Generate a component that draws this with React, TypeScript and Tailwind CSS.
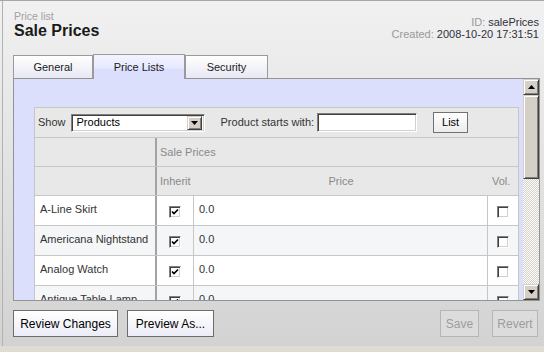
import React from 'react';

const products = ['A-Line Skirt', 'Americana Nightstand', 'Analog Watch', 'Antique Table Lamp'];

const raised =
  'border border-t-[#d4d0c8] border-l-[#d4d0c8] border-r-[#404040] border-b-[#404040] shadow-[inset_1px_1px_0_#ffffff,inset_-1px_-1px_0_#808080] bg-[#d4d0c8]';
const sunken =
  'border border-t-[#808080] border-l-[#808080] border-r-[#ffffff] border-b-[#ffffff] shadow-[inset_1px_1px_0_#404040,inset_-1px_-1px_0_#d4d0c8] bg-white';

function Arrow({ up }: { up?: boolean }) {
  return (
    <svg width="7" height="4" viewBox="0 0 7 4">
      <path d={up ? 'M0 4L3.5 0L7 4Z' : 'M0 0L3.5 4L7 0Z'} fill="#000" />
    </svg>
  );
}

function Check({ checked }: { checked?: boolean }) {
  return (
    <span className={`flex h-[12px] w-[12px] items-center justify-center ${sunken}`}>
      {checked && (
        <svg width="8" height="8" viewBox="0 0 8 8">
          <path d="M1 3.5L3 5.6L7 1.5" stroke="#000" strokeWidth="1.7" fill="none" />
        </svg>
      )}
    </span>
  );
}

function Tab({ label, width, active }: { label: string; width: string; active?: boolean }) {
  if (active) {
    return (
      <div
        className={`${width} -mb-px flex h-[25px] items-center justify-center border border-b-0 border-[#9a9a9a] bg-[linear-gradient(#f3f4ff,#e6e8fe_55%,#dcdffc_60%)] text-[11px] text-[#1a1a1a]`}
      >
        {label}
      </div>
    );
  }
  return (
    <div
      className={`${width} flex h-[23px] items-center justify-center border border-b-0 border-[#9a9a9a] bg-[linear-gradient(#ffffff,#e8e8f4)] text-[11px] text-[#1a1a1a]`}
    >
      {label}
    </div>
  );
}

function Button({ label, width, disabled }: { label: string; width: string; disabled?: boolean }) {
  return (
    <button
      className={`${width} flex h-[27px] items-center justify-center whitespace-nowrap border text-[12px] leading-[14px] ${
        disabled
          ? 'border-[#b6b6b6] bg-[#dcdcdc] text-[#9c9c9c]'
          : 'border-[#6c6c6c] bg-[linear-gradient(#ffffff,#ececf8)] text-[#000]'
      }`}
    >
      {label}
    </button>
  );
}

function Scrollbar() {
  return (
    <div className="flex w-[16px] flex-col">
      <div className={`flex h-[16px] items-center justify-center ${raised}`}>
        <Arrow up />
      </div>
      <div className={`h-[84px] ${raised}`} />
      <div className="flex-1 bg-[repeating-conic-gradient(#d4d0c8_0_25%,#ffffff_0_50%)] bg-[length:2px_2px]" />
      <div className={`flex h-[16px] items-center justify-center ${raised}`}>
        <Arrow />
      </div>
    </div>
  );
}

function PriceTable() {
  return (
    <div className="ml-[20px] mt-[28px] w-[485px] border border-[#c6c6c6] bg-[#e8e8e8] text-[11px] text-[#333]">
      {/* toolbar */}
      <div className="flex h-[30px] items-center border-b border-[#c6c6c6] pl-[3px]">
        <span>Show</span>
        <div className={`ml-[5px] flex h-[18px] w-[134px] items-center justify-between pr-[2px] ${sunken}`}>
          <span className="pl-[5px] text-[#000]">Products</span>
          <span className={`flex h-[14px] w-[15px] items-center justify-center ${raised}`}>
            <Arrow />
          </span>
        </div>
        <span className="ml-[16px]">Product starts with:</span>
        <div className={`ml-[3px] h-[19px] w-[100px] ${sunken}`} />
        <button className="ml-[16px] flex h-[21px] w-[35px] items-center justify-center border border-[#707070] bg-[linear-gradient(#ffffff,#ececec)] text-[11px] text-[#000]">
          List
        </button>
      </div>

      {/* header rows */}
      <div className="flex h-[29px] border-b border-[#c6c6c6]">
        <div className="w-[122px] border-r-2 border-[#a3a3a3]" />
        <div className="flex flex-1 items-center pl-[3px] text-[#888]">Sale Prices</div>
      </div>
      <div className="flex h-[29px] border-b border-[#c6c6c6] text-[#888]">
        <div className="w-[122px] border-r-2 border-[#a3a3a3]" />
        <div className="flex w-[37px] items-center pl-[3px]">Inherit</div>
        <div className="flex w-[294px] items-center justify-center">Price</div>
        <div className="flex flex-1 items-center pl-[4px]">Vol.</div>
      </div>

      {/* data rows */}
      {products.map((name, i) => (
        <div
          key={name}
          className={`flex h-[30px] border-b border-[#c6c6c6] ${i % 2 === 0 ? 'bg-white' : 'bg-[#f5f6f8]'}`}
        >
          <div className="flex w-[122px] items-center whitespace-nowrap border-r-2 border-[#a3a3a3] pb-[2px] pl-[5px]">
            {name}
          </div>
          <div className="flex w-[37px] items-center justify-center border-r border-[#c6c6c6] pt-[3px]">
            <Check checked />
          </div>
          <div className="flex w-[294px] items-center border-r border-[#c6c6c6] pb-[2px] pl-[5px]">0.0</div>
          <div className="flex flex-1 items-center justify-center pt-[2px]">
            <Check />
          </div>
        </div>
      ))}
    </div>
  );
}

export default function App() {
  return (
    <div className="flex h-[352px] w-[544px] flex-col overflow-hidden border-t border-[#a6a6a6] bg-[linear-gradient(#f1f1f1,#d2d2d2)] font-['Liberation_Sans',Arial,sans-serif] text-[#222]">
      <div className="ml-[2px] h-[345px] shrink-0 border-l border-[#b2b2b2]">
        {/* header */}
        <div className="flex h-[53px] justify-between pl-[11px] pr-[5px]">
          <div className="pt-[10px]">
            <div className="text-[10.5px] leading-[11px] text-[#a0a0a0]">Price list</div>
            <div className="text-[16px] font-bold leading-[17px] text-[#1a1a1a]">Sale Prices</div>
          </div>
          <div className="pt-[15px] text-right text-[11px] leading-[12px]">
            <div>
              <span className="text-[#999]">ID:</span> <span className="text-[#303040]">salePrices</span>
            </div>
            <div>
              <span className="text-[#999]">Created:</span>{' '}
              <span className="text-[#303040]">2008-10-20 17:31:51</span>
            </div>
          </div>
        </div>

        {/* tabs */}
        <div className="relative z-10 flex h-[24px] items-end pl-[10px]">
          <Tab label="General" width="w-[80px]" />
          <Tab label="Price Lists" width="w-[92px]" active />
          <Tab label="Security" width="w-[83px]" />
        </div>

        {/* panel */}
        <div className="ml-[10px] flex h-[223px] w-[527px] border border-[#939393]">
          <div className="flex-1 overflow-hidden bg-[#dcdffc]">
            <PriceTable />
          </div>
          <Scrollbar />
        </div>

        {/* footer buttons */}
        <div className="flex h-[45px] items-start justify-between pl-[10px] pr-[6px] pt-[9px]">
          <div className="flex gap-[9px]">
            <Button label="Review Changes" width="w-[105px]" />
            <Button label="Preview As..." width="w-[87px]" />
          </div>
          <div className="flex gap-[13px]">
            <Button label="Save" width="w-[39px]" disabled />
            <Button label="Revert" width="w-[46px]" disabled />
          </div>
        </div>
      </div>
      <div className="h-[6px] shrink-0 bg-[#dfdcd4]" />
    </div>
  );
}
